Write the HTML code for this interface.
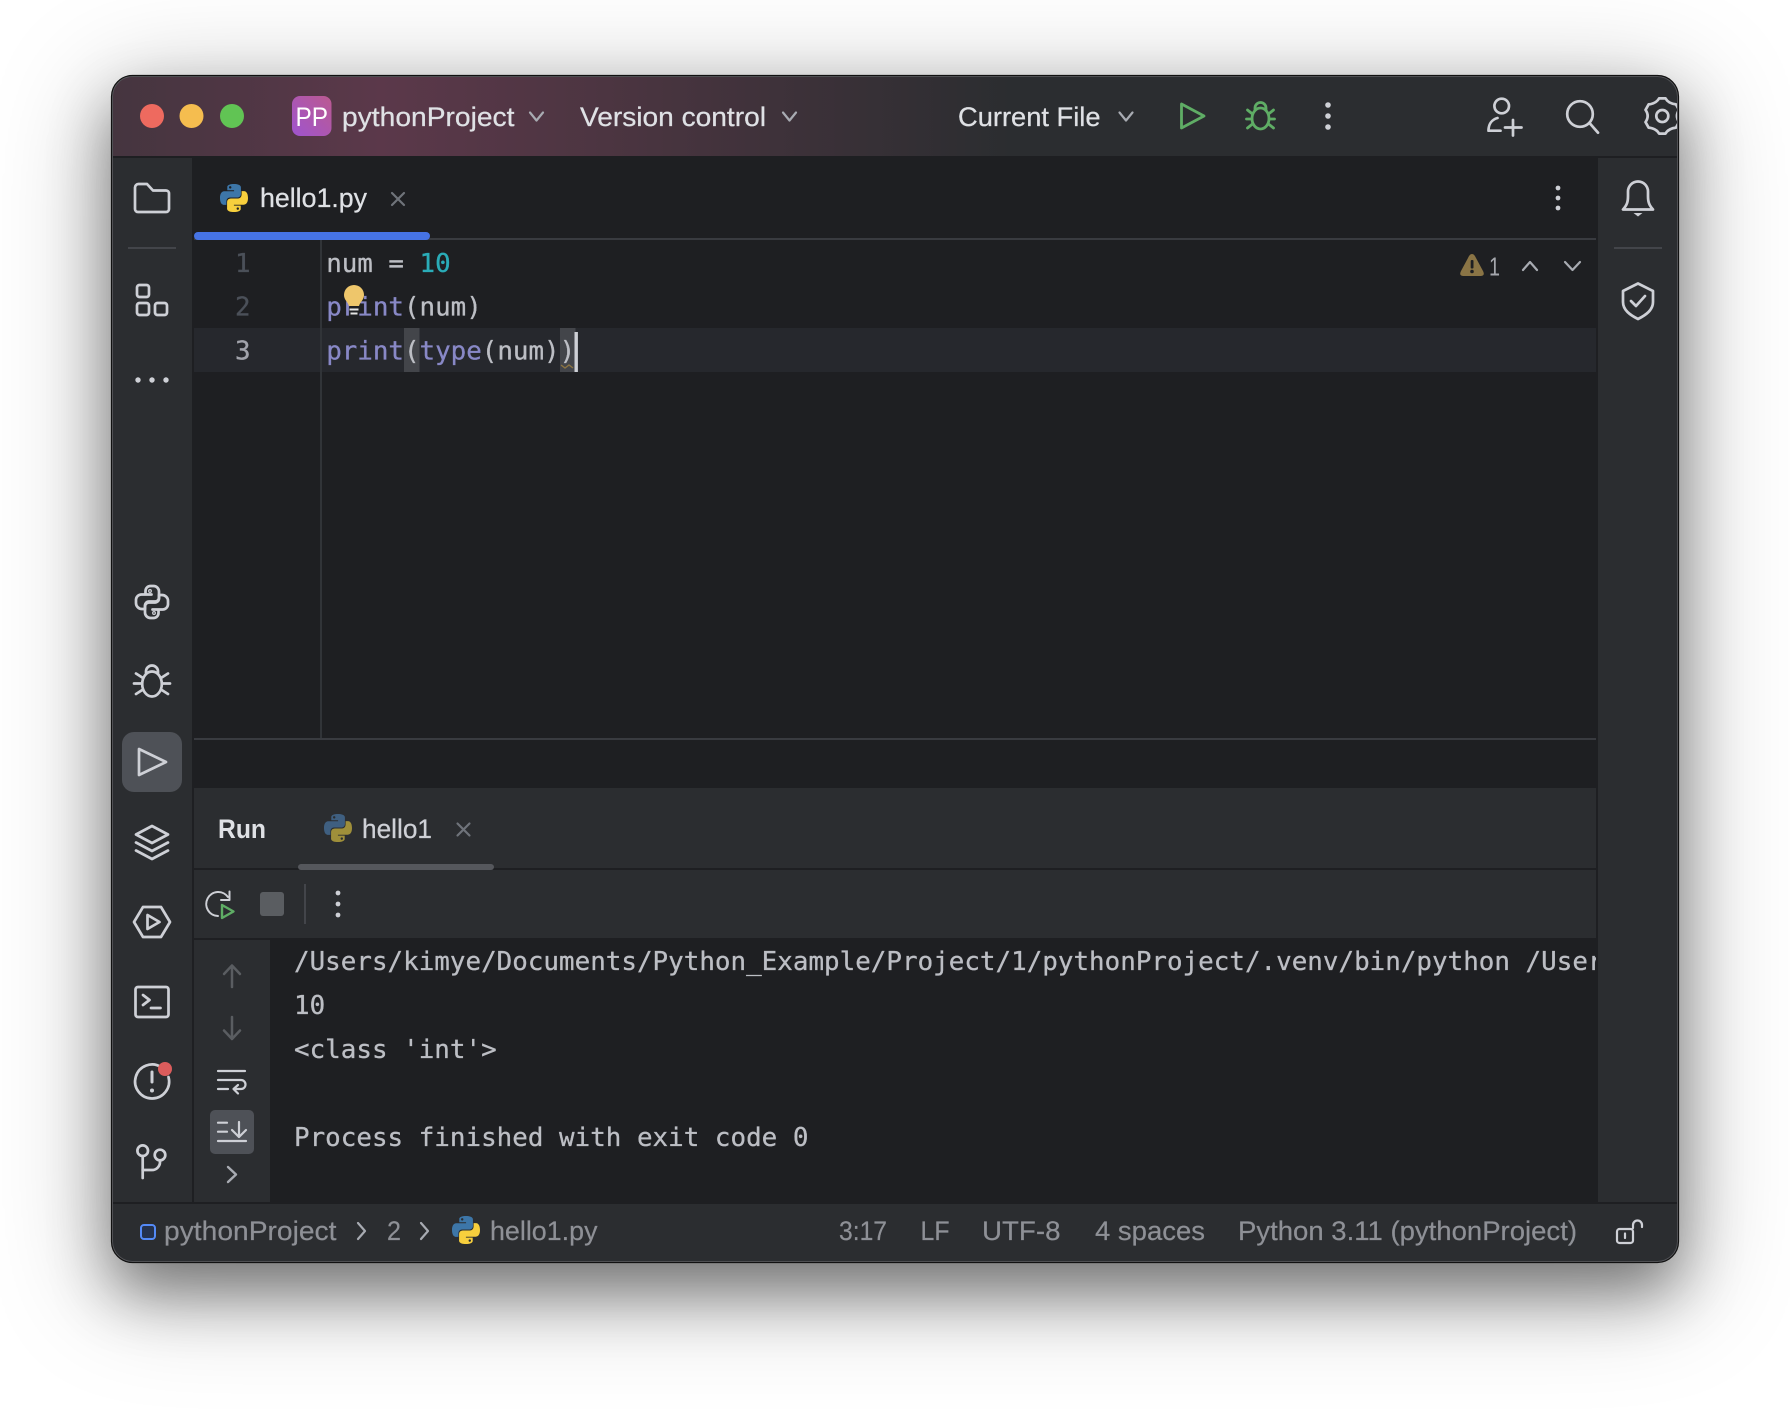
<!DOCTYPE html>
<html lang="en">
<head>
<meta charset="utf-8">
<title>pythonProject</title>
<style>
html,body{margin:0;padding:0;background:#fff;width:1790px;height:1410px;overflow:hidden}
#shadow{position:absolute;left:112px;top:76px;width:1566px;height:1186px;border-radius:20px;box-shadow:0 30px 60px 0 rgba(0,0,0,.42),0 22px 110px 10px rgba(0,0,0,.26)}
svg{position:absolute;left:0;top:0}
text{font-family:"Liberation Sans",sans-serif;white-space:pre}
.m{font-family:"DejaVu Sans Mono","Liberation Mono",monospace;font-size:25.85px;stroke-width:.3}
.t{fill:#bcbec4;stroke:#bcbec4}
.k{fill:#8888c6;stroke:#8888c6}
.n{fill:#2aacb8;stroke:#2aacb8}
.ui{font-size:26.5px;fill:#dfe1e5;stroke:#dfe1e5;stroke-width:.25}
.st{font-size:26.5px;fill:#8e9096;stroke:#8e9096;stroke-width:.2}
.ic{fill:none;stroke:#ced0d6;stroke-width:2.7;stroke-linecap:round;stroke-linejoin:round}
.ch{fill:none;stroke:#a8abb2;stroke-width:2.2;stroke-linecap:round;stroke-linejoin:round}
.dim{fill:none;stroke:#5a5d61;stroke-width:2.5;stroke-linecap:round;stroke-linejoin:round}
</style>
</head>
<body>
<div id="shadow"></div>
<svg width="1790" height="1410" viewBox="0 0 1790 1410" xmlns="http://www.w3.org/2000/svg">
<defs>
<clipPath id="win"><rect x="112" y="76" width="1566" height="1186" rx="20"/></clipPath>
<clipPath id="con"><rect x="270" y="940" width="1326" height="262"/></clipPath>
<linearGradient id="tb" x1="112" x2="1010" y1="0" y2="0" gradientUnits="userSpaceOnUse">
<stop offset="0" stop-color="#45353f"/><stop offset=".3" stop-color="#5b384a"/><stop offset=".55" stop-color="#4c3541"/><stop offset="1" stop-color="#2b2d30"/>
</linearGradient>
<linearGradient id="pp" x1="0" y1="1" x2="1" y2="0"><stop offset="0" stop-color="#9f54cf"/><stop offset="1" stop-color="#bb5a90"/></linearGradient>
<path id="pyb" d="M54.9 0C26.9 0 28.6 12.2 28.6 12.2l0 12.6h26.7v3.8H18s-18-2-18 26.3 15.7 27.3 15.7 27.3h9.4V68.9s-.5-15.7 15.5-15.7h26.6s15 .2 15-14.5V14.4S85 0 54.9 0zM40.1 8.5a4.8 4.8 0 110 9.6 4.8 4.8 0 010-9.6z" fill-rule="evenodd"/>
</defs>

<g clip-path="url(#win)">
<rect x="112" y="76" width="1566" height="1186" fill="#1e1f22"/>
<!-- title bar -->
<rect x="112" y="76" width="1566" height="80" fill="#2b2d30"/>
<rect x="112" y="76" width="900" height="80" fill="url(#tb)"/>
<!-- strips -->
<rect x="112" y="158" width="80" height="1044" fill="#2b2d30"/>
<rect x="1598" y="158" width="80" height="1044" fill="#2b2d30"/>
<rect x="112" y="1204" width="1566" height="58" fill="#2b2d30"/>
<!-- editor -->
<rect x="194" y="238" width="1402" height="2" fill="#393b40"/>
<rect x="194" y="232" width="236" height="8" rx="4" fill="#4673e4"/>
<rect x="194" y="328" width="1402" height="44" fill="#26282d"/>
<rect x="320" y="240" width="2" height="498" fill="#313438"/>
<rect x="194" y="738" width="1402" height="2" fill="#393b40"/>
<rect x="404" y="328" width="15.5" height="44" fill="#43454a"/>
<rect x="560" y="328" width="15.5" height="44" fill="#43454a"/>

<!-- run panel -->
<rect x="194" y="788" width="1402" height="80" fill="#2b2d30"/>
<rect x="298" y="864" width="196" height="6" rx="3" fill="#55575c"/>
<rect x="194" y="870" width="1402" height="68" fill="#2b2d30"/>
<rect x="194" y="940" width="76" height="262" fill="#2b2d30"/>

<!-- traffic lights -->
<circle cx="152" cy="116" r="12" fill="#ee6a5f"/>
<circle cx="191.5" cy="116" r="12" fill="#f5bd4f"/>
<circle cx="232" cy="116" r="12" fill="#61c454"/>
<!-- project -->
<rect x="292" y="96" width="39.5" height="40" rx="8" fill="url(#pp)"/>
<text x="295.5" y="126" font-size="27" fill="#fff" textLength="32.5" lengthAdjust="spacingAndGlyphs">PP</text>
<text class="ui" x="342" y="126" textLength="172.5" lengthAdjust="spacingAndGlyphs">pythonProject</text>
<path class="ch" d="M530 112.5 L536.5 120.5 L543 112.5"/>
<text class="ui" x="580" y="126" textLength="186" lengthAdjust="spacingAndGlyphs">Version control</text>
<path class="ch" d="M783 112.5 L789.5 120.5 L796 112.5"/>
<text class="ui" x="958" y="126" textLength="142.5" lengthAdjust="spacingAndGlyphs">Current File</text>
<path class="ch" d="M1119.5 112.5 L1126 120.5 L1132.5 112.5"/>
<!-- run/debug -->
<path d="M1181.5 104 V128 L1204 116 Z" fill="none" stroke="#5fad65" stroke-width="2.8" stroke-linejoin="round"/>
<g fill="none" stroke="#5fad65" stroke-width="2.8" stroke-linecap="round" stroke-linejoin="round">
<ellipse cx="1260.5" cy="118.5" rx="8.5" ry="10.5"/>
<path d="M1255 109.5 v-1.5 a5.5 5.5 0 0 1 11 0 v1.5"/>
<path d="M1246.5 119 H1252 M1269 119 H1274.5 M1247.5 110 l5 4 M1273.5 110 l-5 4 M1247.5 128 l5-4 M1273.5 128 l-5-4"/>
</g>
<g fill="#ced0d6"><circle cx="1328" cy="105" r="2.8"/><circle cx="1328" cy="116" r="2.8"/><circle cx="1328" cy="127" r="2.8"/></g>
<!-- add user -->
<g class="ic">
<circle cx="1501.7" cy="106" r="7.3"/>
<path d="M1500.5 130.7 H1488.5 C1488.5 124 1492 119.5 1497.5 118"/>
<path d="M1513 120 V135.5 M1505 127.5 H1521.5"/>
<circle cx="1580" cy="114" r="12.8"/>
<path d="M1589.5 123 L1598 132.7"/>
<path transform="translate(1662.3 116)" d="M-3.2 -17.6 L3.2 -17.6 Q6 -12.5 13.7 -11.6 L16.8 -6.1 Q12.5 0 16.8 6.1 L13.7 11.6 Q6 12.5 3.2 17.6 L-3.2 17.6 Q-6 12.5 -13.7 11.6 L-16.8 6.1 Q-12.5 0 -16.8 -6.1 L-13.7 -11.6 Q-6 -12.5 -3.2 -17.6Z"/>
<circle cx="1662.3" cy="116" r="6"/>
</g>

<!-- tab -->
<g transform="translate(220 184) scale(.2545)"><use href="#pyb" fill="#3d76a8"/><use href="#pyb" fill="#f7cf3d" transform="rotate(180 55 55)"/></g>
<text class="ui" x="260" y="207" textLength="107" lengthAdjust="spacingAndGlyphs">hello1.py</text>
<path d="M392 193 L404 205 M404 193 L392 205" stroke="#6f737a" stroke-width="2.2" stroke-linecap="round"/>
<g fill="#ced0d6"><circle cx="1558" cy="188" r="2.4"/><circle cx="1558" cy="198" r="2.4"/><circle cx="1558" cy="208" r="2.4"/></g>

<!-- editor text -->
<text x="235" y="272" class="m" fill="#4b5059" stroke="#4b5059">1</text>
<text x="235" y="315.5" class="m" fill="#4b5059" stroke="#4b5059">2</text>
<text x="235" y="359.5" class="m" fill="#a1a3ab" stroke="#a1a3ab">3</text>
<text x="326.2" y="272" class="m t">num = <tspan class="n">10</tspan></text>
<text x="326.2" y="315.5" class="m t"><tspan class="k">print</tspan>(num)</text>
<text x="326.2" y="359.5" class="m t"><tspan class="k">print</tspan>(<tspan class="k">type</tspan>(num))</text>
<rect x="574.5" y="332" width="3.4" height="40" fill="#ced0d6"/>
<path d="M561 365 l4 3 4-3 4 3" fill="none" stroke="#8c7442" stroke-width="1.4"/>
<!-- lightbulb -->
<path d="M354 285 a10 10 0 0 1 10 10 c0 5-4 7-5 11 h-10 c-1-4-5-6-5-11 a10 10 0 0 1 10-10z" fill="#eec66b"/>
<path d="M349.5 309.5 h9 M350.5 313.5 h7" stroke="#e4e4e4" stroke-width="2"/>

<!-- warning -->
<path d="M1472 254 C1474 254 1475 256 1476 258 L1483 271 C1485 275 1483 276 1480 276 H1464 C1461 276 1459 275 1461 271 L1468 258 C1469 256 1470 254 1472 254Z" fill="#8a7445"/>
<rect x="1470.7" y="260" width="2.8" height="8.5" rx="1" fill="#1e1f22"/>
<circle cx="1472" cy="271.5" r="1.8" fill="#1e1f22"/>
<text x="1489" y="275.5" font-size="26" fill="#a4a6ac" textLength="11" lengthAdjust="spacingAndGlyphs">1</text>
<path class="ch" d="M1523 270 L1530 262 L1537 270"/>
<path class="ch" d="M1565 262 L1572.5 270 L1580 262"/>

<!-- left strip -->
<g class="ic">
<path d="M135 187.5 a3.5 3.5 0 0 1 3.5-3.5 h8.5 l6 6.5 h13 a3 3 0 0 1 3 3 v15.5 a3 3 0 0 1-3 3 h-28 a3 3 0 0 1-3-3 z"/>
<rect x="137" y="285" width="12" height="12" rx="2.5"/>
<rect x="137" y="303" width="12" height="12" rx="2.5"/>
<rect x="155" y="303" width="12" height="12" rx="2.5"/>
</g>
<rect x="128" y="247" width="48" height="2" fill="#43454a"/>
<g fill="#ced0d6"><circle cx="138" cy="380" r="2.7"/><circle cx="152" cy="380" r="2.7"/><circle cx="166" cy="380" r="2.7"/></g>

<g class="ic" transform="translate(135 585)">
<g><path d="M10.5 9.5 V6 a5 5 0 0 1 5-5 h3 a5.5 5.5 0 0 1 5.5 5.5 v6 a4 4 0 0 1-4 4 h-6 a4 4 0 0 0-4 4 v3.5 H7 a6 6 0 0 1-6-6 v-3.5 a5.5 5.5 0 0 1 5.5-5 h10"/>
<circle cx="15" cy="6" r=".6"/></g>
<g transform="rotate(180 17 17)"><path d="M10.5 9.5 V6 a5 5 0 0 1 5-5 h3 a5.5 5.5 0 0 1 5.5 5.5 v6 a4 4 0 0 1-4 4 h-6 a4 4 0 0 0-4 4 v3.5 H7 a6 6 0 0 1-6-6 v-3.5 a5.5 5.5 0 0 1 5.5-5 h10"/>
<circle cx="15" cy="6" r=".6"/></g>
</g>
<g class="ic">
<ellipse cx="152" cy="684" rx="9.8" ry="12.5"/>
<path d="M146 673 v-1.5 a6 6 0 0 1 12 0 v1.5"/>
<path d="M134 683.5 H142 M162 683.5 H170 M136 673.5 l7 4.5 M168 673.5 l-7 4.5 M136 694 l7-4.5 M168 694 l-7-4.5"/>
</g>
<rect x="122" y="732" width="60" height="60" rx="12" fill="#4e5157"/>
<path class="ic" d="M139 749 V775 L166 762 Z" stroke-width="3"/>
<g class="ic">
<path d="M152 826 L168 834.5 L152 843 L136 834.5Z"/>
<path d="M136 842.5 L152 851 L168 842.5"/>
<path d="M136 850.5 L152 859 L168 850.5"/>
<path d="M143 907 H161 L170 922 L161 937 H143 L134 922Z"/>
<path d="M147.5 915 V929 L159.5 922Z"/>
<rect x="135.5" y="987" width="33" height="30" rx="2.5"/>
<path d="M143 995 l6.5 5 -6.5 5"/>
<path d="M151 1008 H160.5"/>
<path d="M161 1067 A17 17 0 1 0 168.5 1077"/>
<path d="M152 1072 V1082" stroke-width="3"/>
<circle cx="142.7" cy="1150.7" r="5.3"/>
<path d="M142.7 1156 V1178"/>
<circle cx="160" cy="1155" r="5.3"/>
<path d="M160 1160.5 v1.5 a8 8 0 0 1-8 8 h-9.3"/>
</g>
<circle cx="152" cy="1090.5" r="2" fill="#ced0d6"/>
<circle cx="165" cy="1069" r="7" fill="#db5c5c"/>

<!-- right strip -->
<g class="ic">
<path d="M1623 209.5 H1653 C1649 205 1648 202 1648 196 V191.5 A10 10 0 0 0 1628 191.5 V196 C1628 202 1627 205 1623 209.5Z"/>
<path d="M1638 283.5 L1653 291 V302 C1653 310 1646 315 1638 319 C1630 315 1623 310 1623 302 V291Z"/>
<path d="M1631 301 l5 5 9-10"/>
</g>
<path d="M1633.5 213 h9 l-4.5 3.5 z" fill="#ced0d6"/>
<rect x="1614" y="247" width="48" height="2" fill="#43454a"/>

<!-- run tabs -->
<text x="218" y="838" font-size="26.5" font-weight="700" fill="#dfe1e5" textLength="48" lengthAdjust="spacingAndGlyphs">Run</text>
<g transform="translate(324 814) scale(.2545)"><use href="#pyb" fill="#3f5f80"/><use href="#pyb" fill="#9f8f3a" transform="rotate(180 55 55)"/></g>
<text x="362" y="838" font-size="26.5" fill="#ced0d6" stroke="#ced0d6" stroke-width=".25" textLength="70" lengthAdjust="spacingAndGlyphs">hello1</text>
<path d="M457.5 823.5 L469.5 835.5 M469.5 823.5 L457.5 835.5" stroke="#6f737a" stroke-width="2.2" stroke-linecap="round"/>

<!-- run toolbar -->
<path class="ic" d="M228 897 A12 12 0 1 0 218 916" style="stroke-width:2"/>
<path class="ic" d="M229.5 891.5 V900 H221" style="stroke-width:2"/>
<path d="M222 905 V918 L233.5 911.5 Z" fill="#2b2d30" stroke="#5fad65" stroke-width="2.4" stroke-linejoin="round"/>
<rect x="260" y="892" width="24" height="24" rx="3" fill="#5a5d61"/>
<rect x="304" y="884" width="2" height="40" fill="#43454a"/>
<g fill="#ced0d6"><circle cx="338" cy="893" r="2.4"/><circle cx="338" cy="904" r="2.4"/><circle cx="338" cy="915" r="2.4"/></g>

<!-- console side -->
<path class="dim" d="M232 965.5 V987 M224 974 L232 965.5 L240 974"/>
<path class="dim" d="M232 1017 V1039 M224 1030.5 L232 1039 L240 1030.5"/>
<path class="ic" style="stroke-width:2.2" d="M218 1071 H245 M218 1089 H228 M218 1080 H241 a4.5 4.5 0 0 1 0 9 H234 M238 1085 l-4.5 4 4.5 4.5"/>
<rect x="210" y="1110" width="44" height="44" rx="5" fill="#4e5157"/>
<path class="ic" style="stroke-width:2.2" d="M218 1122.7 H227 M218 1131.7 H227 M218 1141 H246 M239 1122 V1137 M232 1130 l7 7 7-7"/>
<path class="ch" d="M228 1167 L236 1174.5 L228 1182" style="stroke-width:2.4"/>

<!-- console text -->
<g clip-path="url(#con)" letter-spacing=".03">
<text x="294" y="970" class="m t">/Users/kimye/Documents/Python_Example/Project/1/pythonProject/.venv/bin/python /Users/kimye/Documents</text>
<text x="294" y="1014" class="m t">10</text>
<text x="294" y="1058" class="m t">&lt;class 'int'&gt;</text>
<text x="294" y="1146" class="m t">Process finished with exit code 0</text>
</g>

<!-- status bar -->
<rect x="141" y="1225" width="14" height="14" rx="3" fill="#25324d" stroke="#548af7" stroke-width="2"/>
<text class="st" x="164" y="1240" textLength="172.5" lengthAdjust="spacingAndGlyphs">pythonProject</text>
<path class="ch" d="M358 1223 L365 1231 L358 1239"/>
<text class="st" x="387" y="1240" textLength="14" lengthAdjust="spacingAndGlyphs">2</text>
<path class="ch" d="M421 1223 L428 1231 L421 1239"/>
<g transform="translate(452 1216) scale(.2545)"><use href="#pyb" fill="#3d76a8"/><use href="#pyb" fill="#f7cf3d" transform="rotate(180 55 55)"/></g>
<text class="st" x="490" y="1240" textLength="107.5" lengthAdjust="spacingAndGlyphs">hello1.py</text>
<text class="st" x="839" y="1240" textLength="48" lengthAdjust="spacingAndGlyphs">3:17</text>
<text class="st" x="920.5" y="1240" textLength="29" lengthAdjust="spacingAndGlyphs">LF</text>
<text class="st" x="982" y="1240" textLength="78.5" lengthAdjust="spacingAndGlyphs">UTF-8</text>
<text class="st" x="1095" y="1240" textLength="110" lengthAdjust="spacingAndGlyphs">4 spaces</text>
<text class="st" x="1238" y="1240" textLength="339" lengthAdjust="spacingAndGlyphs">Python 3.11 (pythonProject)</text>
<g fill="none" stroke="#ced0d6" stroke-width="2.2" stroke-linecap="round">
<rect x="1617" y="1229" width="16" height="14" rx="2.5"/>
<path d="M1633 1228 v-3 a4.5 4.5 0 0 1 9 0 v2"/>
<path d="M1625 1233.5 V1238"/>
</g>
</g>

<!-- window frame -->
<rect x="112.5" y="76.5" width="1565" height="1185" rx="20" fill="none" stroke="#57585c" stroke-width="1"/>
<rect x="111.5" y="75.5" width="1567" height="1187" rx="21" fill="none" stroke="#111" stroke-width="1.2"/>
</svg>
</body>
</html>
